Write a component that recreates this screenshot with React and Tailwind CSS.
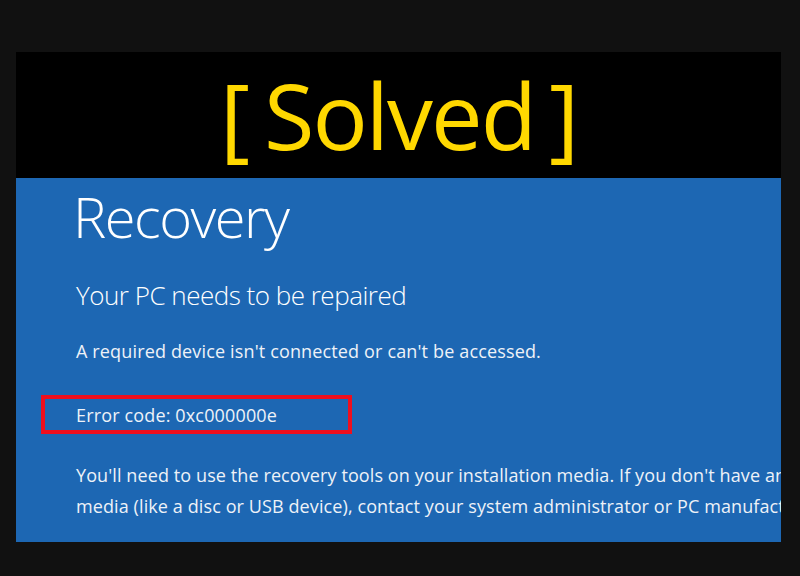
export default function App() {
  const font = { fontFamily: '"Open Sans", "Noto Sans", sans-serif' };
  return (
    <div className="w-[800px] h-[576px] bg-[#111111] pt-[52px] pl-[16px]" style={font}>
      <div className="w-[765px] h-[490px] flex flex-col overflow-hidden">
        <div className="h-[126px] bg-black flex items-center justify-center gap-[14px] text-[92px] leading-none text-[#ffd800] pl-[2px]">
          <span>[</span>
          <span className="tracking-[-2px]">Solved</span>
          <span>]</span>
        </div>
        <div className="flex-1 bg-[#1d67b3] pl-[60px] pt-[10px] text-white whitespace-nowrap overflow-hidden">
          <div className="-ml-[3px] text-[56px] leading-none font-light tracking-[-1.5px]">Recovery</div>
          <div className="mt-[38px] text-[26px] leading-none font-light tracking-[-0.5px]">Your PC needs to be repaired</div>
          <div className="mt-[34px] text-[18px] leading-none tracking-[0.15px] text-[#eef2f8]">A required device isn't connected or can't be accessed.</div>
          <div className="mt-[35px] -ml-[35px] w-[311px] h-[39px] border-4 border-[#ee0f1e] pl-[31px] pt-[7px]">
            <div className="text-[18px] leading-none tracking-[0.15px] text-[#eef2f8]">Error code: 0xc000000e</div>
          </div>
          <div className="mt-[25.5px] text-[18px] leading-[31px] tracking-[0.1px] text-[#eef2f8]">
            <div>You'll need to use the recovery tools on your installation media. If you don't have any installation</div>
            <div>media (like a disc or USB device), contact your system administrator or PC manufacturer.</div>
          </div>
        </div>
      </div>
    </div>
  );
}
